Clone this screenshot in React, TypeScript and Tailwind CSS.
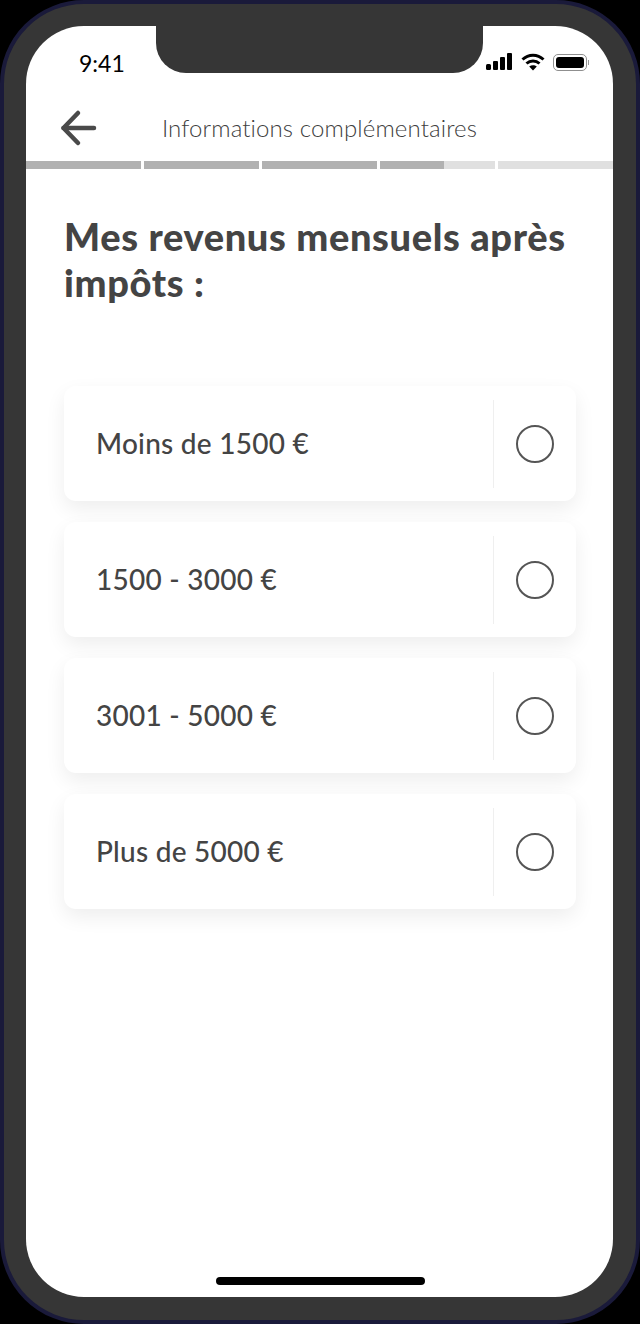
const options = ['Moins de 1500 €', '1500 - 3000 €', '3001 - 5000 €', 'Plus de 5000 €'];

function StatusIcons() {
  return (
    <div className="flex items-center gap-[8px]">
      <svg width="27" height="18" viewBox="0 0 27 18" fill="black">
        <rect x="0" y="11" width="5" height="6" rx="1.5" />
        <rect x="7" y="8" width="5" height="9" rx="1" />
        <rect x="14" y="4" width="5" height="13" rx="1" />
        <rect x="21" y="0" width="5" height="17" rx="1" />
      </svg>
      <svg width="24" height="18" viewBox="0 0 24 18" fill="none" stroke="black" strokeWidth="3">
        <path d="M1.5 6.5C7.5 .8 16.5 .8 22.5 6.5" />
        <path d="M5.5 10.5C9.2 7 14.8 7 18.5 10.5" />
        <path d="M12 17.5L8.2 13.6C10.4 11.8 13.6 11.8 15.8 13.6Z" fill="black" stroke="none" />
      </svg>
      <div className="flex items-center gap-[1px]">
        <div className="w-[34px] h-[17px] rounded-[5px] border border-[#8f8f8f] p-[2px]">
          <div className="w-full h-full rounded-[3px] bg-black" />
        </div>
        <div className="w-[1px] h-[5px] bg-[#9a9a9a]" />
      </div>
    </div>
  );
}

function Option({ label }: { label: string }) {
  return (
    <div className="h-[115px] rounded-[12px] bg-white shadow-[0_8px_20px_rgba(0,0,0,0.07)] flex items-center">
      <div className="flex-1 pl-[32px] pb-[2px] text-[28px] font-medium text-[#444444] font-['Lato',sans-serif] tracking-[0.25px]">{label}</div>
      <div className="w-[1px] h-[88px] bg-[#efefef]" />
      <div className="w-[82px] flex justify-center">
        <div className="w-[38px] h-[38px] rounded-full border-2 border-[#555555]" />
      </div>
    </div>
  );
}

export default function App() {
  return (
    <div className="w-[640px] h-[1324px] bg-black">
      <div className="relative w-full h-full rounded-[84px] border-[4px] border-[#1a1a3a] bg-[#363636] pt-[22px] pl-[22px] pr-[23px] pb-[23px]">
        <div className="relative w-full h-full rounded-[58px] bg-white overflow-hidden font-['Lato',sans-serif]">
          {/* notch */}
          <div className="absolute left-[130px] top-0 w-[327px] h-[47px] bg-[#363636] rounded-b-[30px]" />

          <div className="h-[54px] flex items-start justify-between pl-[53px] pr-[24px]">
            <span className="mt-[22px] text-[23px] leading-[30px] text-black font-['Lato',sans-serif]">9:41</span>
            <div className="mt-[27px] ml-auto"><StatusIcons /></div>
          </div>

          <div className="relative h-[81px] flex items-center justify-center">
            <svg className="absolute left-[33px] top-[29px]" width="40" height="38" viewBox="0 0 40 38" fill="none" stroke="#4a4a4a" strokeWidth="4.5" strokeLinecap="round" strokeLinejoin="round">
              <path d="M19 4L4.5 19L19 34" />
              <path d="M4.5 19H35" />
            </svg>
            <span className="mt-[15px] text-[24px] font-light text-[#404040] tracking-[0.12px]">Informations complémentaires</span>
          </div>

          <div className="grid grid-cols-5 gap-[3px] h-[8px]">
            <div className="bg-[#b1b1b1]" />
            <div className="bg-[#b1b1b1]" />
            <div className="bg-[#b1b1b1]" />
            <div className="bg-[#e0e0e0]">
              <div className="w-[64px] h-full bg-[#b1b1b1]" />
            </div>
            <div className="bg-[#e0e0e0]" />
          </div>

          <div className="pt-[44px] pl-[38px] pr-[37px]">
            <h1 className="text-[38px] leading-[46px] font-black text-[#444444] whitespace-pre-line font-['Lato',sans-serif] tracking-[0.65px]">{'Mes revenus mensuels après\nimpôts :'}</h1>
            <div className="mt-[81px] flex flex-col gap-[21px]">
              {options.map((o) => <Option key={o} label={o} />)}
            </div>
          </div>

          {/* home indicator */}
          <div className="absolute left-[190px] bottom-[12px] w-[209px] h-[8px] rounded-full bg-black" />
        </div>
      </div>
    </div>
  );
}
